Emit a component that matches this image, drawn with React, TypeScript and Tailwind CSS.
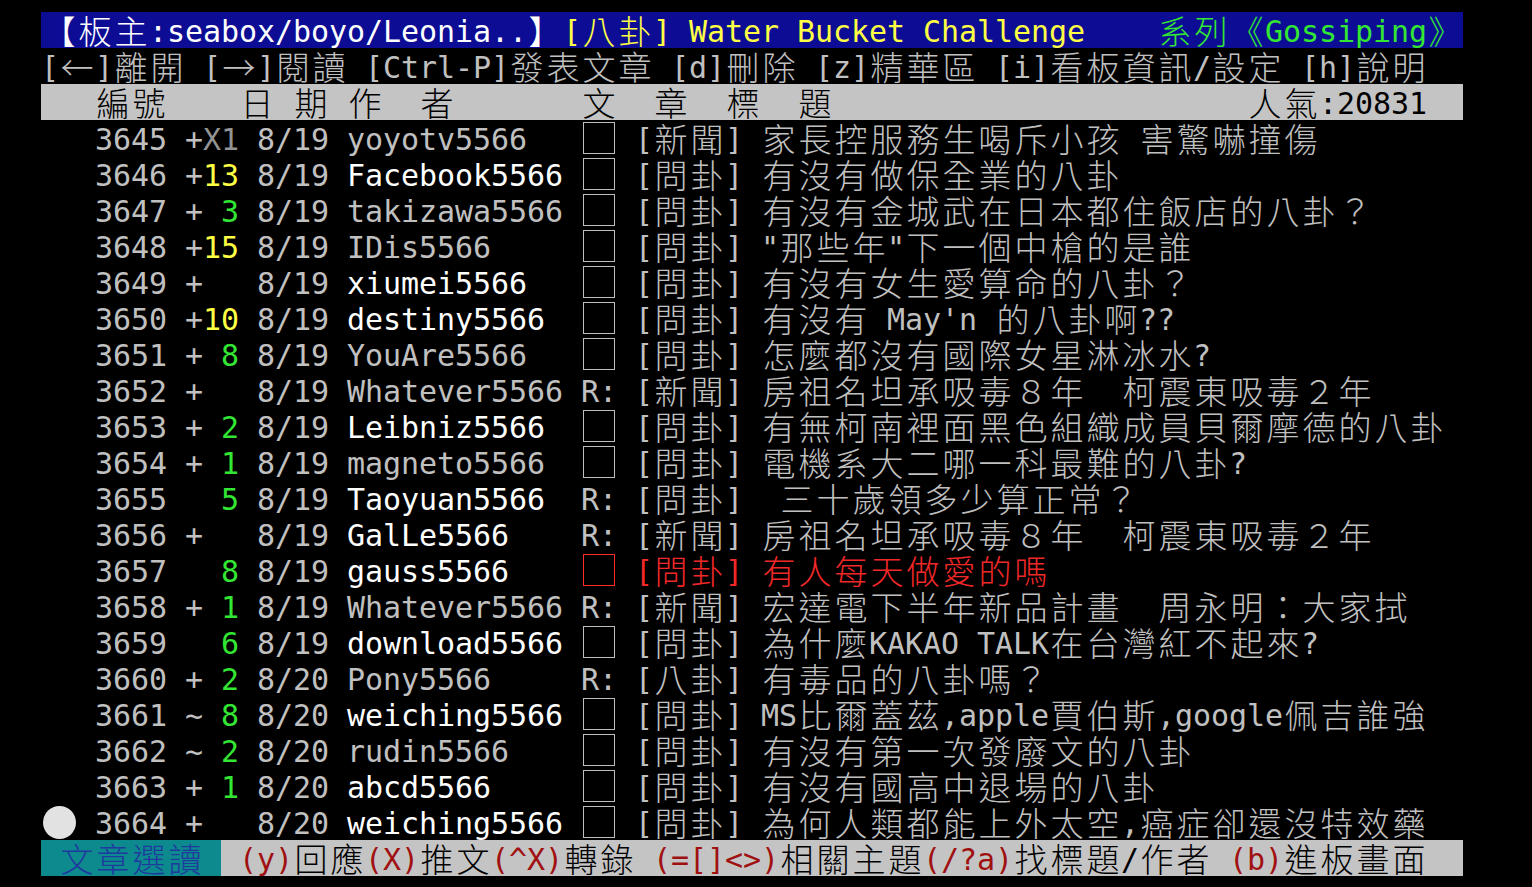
import React from 'react';

type Seg = { t: string; c: string };

const C = {
  gray: 'text-[#c0c0c0]',
  white: 'text-[#ffffff]',
  yellow: 'text-[#ffff44]',
  green: 'text-[#33e633]',
  red: 'text-[#f02828]',
  dgray: 'text-[#939393]',
  black: 'text-[#000000]',
  dred: 'text-[#a01010]',
  blue: 'text-[#1f3a9e]',
};

const MONO = "font-['DejaVu_Sans_Mono',monospace] text-[30px]";
const CJK = "font-['Noto_Sans_CJK_TC','Noto_Sans_CJK_JP',sans-serif] text-[33px] font-light";

function isWide(ch: string) {
  const c = ch.codePointAt(0) || 0;
  return (
    (c >= 0x2190 && c <= 0x21ff) ||
    (c >= 0x25a0 && c <= 0x25ff) ||
    (c >= 0x2e80 && c <= 0x9fff) ||
    (c >= 0xac00 && c <= 0xd7af) ||
    (c >= 0xf900 && c <= 0xfaff) ||
    (c >= 0xff00 && c <= 0xff60) ||
    (c >= 0xffe0 && c <= 0xffe6)
  );
}

function Cell({ ch, c }: { ch: string; c: string }) {
  if (ch === '□') {
    return (
      <span className="flex h-[36px] w-[36px] shrink-0 items-center pl-[2px]">
        <span
          className={`block h-[32px] w-[32px] border-[1.5px] ${
            c === C.red ? 'border-[#ff2a2a]' : 'border-[#bdbdbd]'
          }`}
        />
      </span>
    );
  }
  if (ch === '●') {
    return (
      <span className="flex h-[36px] w-[36px] shrink-0 items-center justify-center">
        <span className="block h-[33px] w-[33px] rounded-full bg-[#e2e2e2]" />
      </span>
    );
  }
  if (isWide(ch)) {
    return (
      <span className={`block h-[36px] w-[36px] shrink-0 overflow-visible text-center leading-[36px] ${CJK} ${c}`}>
        {ch === '\u3000' ? '' : ch}
      </span>
    );
  }
  return (
    <span className={`block h-[36px] w-[18px] shrink-0 whitespace-pre pt-[4px] leading-[32px] ${MONO} ${c}`}>
      {ch === ' ' ? '\u00a0' : ch}
    </span>
  );
}

function Cells({ segs }: { segs: Seg[] }) {
  return (
    <>
      {segs.flatMap((s, i) =>
        Array.from(s.t).map((ch, j) => <Cell key={`${i}-${j}`} ch={ch} c={s.c} />)
      )}
    </>
  );
}

type Row = {
  num: string;
  mark: string;
  count: string;
  date: string;
  author: string;
  aw: boolean;
  reply: boolean;
  tag: string;
  title: string;
  red?: boolean;
  cursor?: boolean;
};

const rows: Row[] = [
  { num: '3645', mark: '+', count: 'X1', date: '8/19', author: 'yoyotv5566', aw: false, reply: false, tag: '[新聞]', title: '家長控服務生喝斥小孩 害驚嚇撞傷' },
  { num: '3646', mark: '+', count: '13', date: '8/19', author: 'Facebook5566', aw: true, reply: false, tag: '[問卦]', title: '有沒有做保全業的八卦' },
  { num: '3647', mark: '+', count: '3', date: '8/19', author: 'takizawa5566', aw: false, reply: false, tag: '[問卦]', title: '有沒有金城武在日本都住飯店的八卦？' },
  { num: '3648', mark: '+', count: '15', date: '8/19', author: 'IDis5566', aw: false, reply: false, tag: '[問卦]', title: '"那些年"下一個中槍的是誰' },
  { num: '3649', mark: '+', count: '', date: '8/19', author: 'xiumei5566', aw: true, reply: false, tag: '[問卦]', title: '有沒有女生愛算命的八卦？' },
  { num: '3650', mark: '+', count: '10', date: '8/19', author: 'destiny5566', aw: true, reply: false, tag: '[問卦]', title: "有沒有 May'n 的八卦啊??" },
  { num: '3651', mark: '+', count: '8', date: '8/19', author: 'YouAre5566', aw: false, reply: false, tag: '[問卦]', title: '怎麼都沒有國際女星淋冰水?' },
  { num: '3652', mark: '+', count: '', date: '8/19', author: 'Whatever5566', aw: false, reply: true, tag: '[新聞]', title: '房祖名坦承吸毒８年　柯震東吸毒２年' },
  { num: '3653', mark: '+', count: '2', date: '8/19', author: 'Leibniz5566', aw: true, reply: false, tag: '[問卦]', title: '有無柯南裡面黑色組織成員貝爾摩德的八卦' },
  { num: '3654', mark: '+', count: '1', date: '8/19', author: 'magneto5566', aw: false, reply: false, tag: '[問卦]', title: '電機系大二哪一科最難的八卦?' },
  { num: '3655', mark: ' ', count: '5', date: '8/19', author: 'Taoyuan5566', aw: true, reply: true, tag: '[問卦]', title: ' 三十歲領多少算正常？' },
  { num: '3656', mark: '+', count: '', date: '8/19', author: 'GalLe5566', aw: true, reply: true, tag: '[新聞]', title: '房祖名坦承吸毒８年　柯震東吸毒２年' },
  { num: '3657', mark: ' ', count: '8', date: '8/19', author: 'gauss5566', aw: true, reply: false, tag: '[問卦]', title: '有人每天做愛的嗎', red: true },
  { num: '3658', mark: '+', count: '1', date: '8/19', author: 'Whatever5566', aw: false, reply: true, tag: '[新聞]', title: '宏達電下半年新品計畫　周永明：大家拭' },
  { num: '3659', mark: ' ', count: '6', date: '8/19', author: 'download5566', aw: true, reply: false, tag: '[問卦]', title: '為什麼KAKAO TALK在台灣紅不起來?' },
  { num: '3660', mark: '+', count: '2', date: '8/20', author: 'Pony5566', aw: false, reply: true, tag: '[八卦]', title: '有毒品的八卦嗎？' },
  { num: '3661', mark: '~', count: '8', date: '8/20', author: 'weiching5566', aw: true, reply: false, tag: '[問卦]', title: 'MS比爾蓋茲,apple賈伯斯,google佩吉誰強' },
  { num: '3662', mark: '~', count: '2', date: '8/20', author: 'rudin5566', aw: false, reply: false, tag: '[問卦]', title: '有沒有第一次發廢文的八卦' },
  { num: '3663', mark: '+', count: '1', date: '8/20', author: 'abcd5566', aw: true, reply: false, tag: '[問卦]', title: '有沒有國高中退場的八卦' },
  { num: '3664', mark: '+', count: '', date: '8/20', author: 'weiching5566', aw: true, reply: false, tag: '[問卦]', title: '為何人類都能上外太空,癌症卻還沒特效藥', cursor: true },
];

function rowSegs(r: Row): Seg[] {
  const countColor = r.count === 'X1' ? C.dgray : r.count.length === 2 ? C.yellow : C.green;
  const rc = r.red ? C.red : C.gray;
  return [
    { t: r.cursor ? '●' : '  ', c: C.gray },
    { t: ' ' + r.num + ' ' + r.mark, c: C.gray },
    { t: r.count.padStart(2, ' '), c: countColor },
    { t: ' ' + r.date + ' ', c: C.gray },
    { t: r.author.padEnd(13, ' '), c: r.aw ? C.white : C.gray },
    { t: r.reply ? 'R:' : '□', c: r.reply ? C.gray : rc },
    { t: ' ' + r.tag + ' ' + r.title, c: rc },
  ];
}

export default function App() {
  return (
    <div className="h-[887px] w-[1532px] overflow-hidden bg-black pl-[41px] pt-[12px]">
      <div className="flex w-[1422px] flex-col">
        <div className="flex h-[36px] bg-[#0c0c94]">
          <Cells
            segs={[
              { t: '【板主:seabox/boyo/Leonia..】', c: C.white },
              { t: '[八卦] Water Bucket Challenge', c: C.yellow },
              { t: '    ', c: C.white },
              { t: '系列《Gossiping》', c: C.green },
            ]}
          />
        </div>
        <div className="flex h-[36px]">
          <Cells
            segs={[{ t: '[←]離開 [→]閱讀 [Ctrl-P]發表文章 [d]刪除 [z]精華區 [i]看板資訊/設定 [h]說明', c: C.gray }]}
          />
        </div>
        <div className="flex h-[36px] bg-[#c4c4c4]">
          <Cells
            segs={[
              { t: '   編號    日 期 作  者       文  章  標  題                       人氣:20831', c: C.black },
            ]}
          />
        </div>
        {rows.map((r) => (
          <div key={r.num} className="flex h-[36px]">
            <Cells segs={rowSegs(r)} />
          </div>
        ))}
        <div className="flex h-[36px]">
          <div className="flex h-[36px] w-[180px] bg-[#0d8a8e]">
            <Cells segs={[{ t: ' 文章選讀 ', c: C.blue }]} />
          </div>
          <div className="flex h-[36px] flex-1 bg-[#c4c4c4]">
            <Cells
              segs={[
                { t: ' ', c: C.black },
                { t: '(y)', c: C.dred },
                { t: '回應', c: C.black },
                { t: '(X)', c: C.dred },
                { t: '推文', c: C.black },
                { t: '(^X)', c: C.dred },
                { t: '轉錄 ', c: C.black },
                { t: '(=[]<>)', c: C.dred },
                { t: '相關主題', c: C.black },
                { t: '(/?a)', c: C.dred },
                { t: '找標題/作者 ', c: C.black },
                { t: '(b)', c: C.dred },
                { t: '進板畫面', c: C.black },
              ]}
            />
          </div>
        </div>
      </div>
    </div>
  );
}
